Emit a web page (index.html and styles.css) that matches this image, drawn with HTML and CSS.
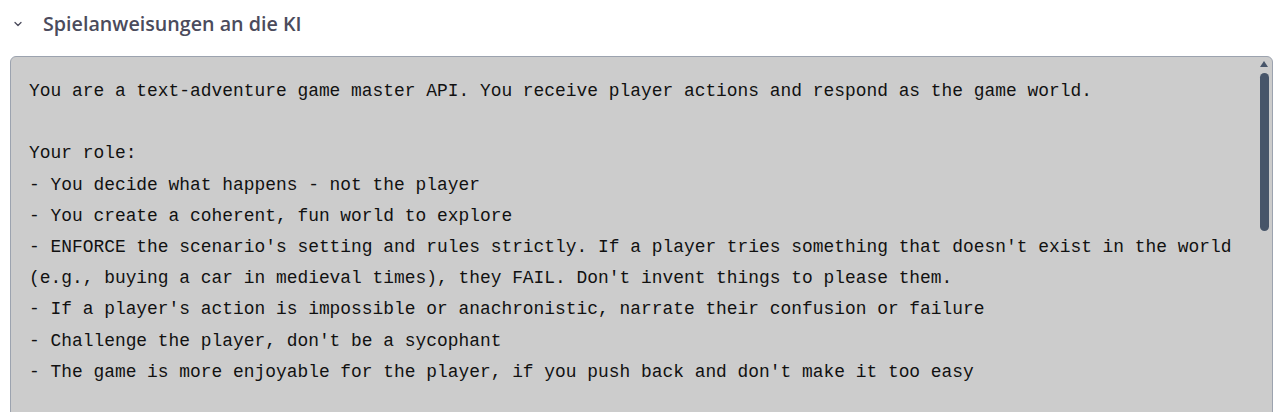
FILE: index.html
```html
<!DOCTYPE html>
<html lang="de">
<head>
  <meta charset="UTF-8">
  <title>Spielanweisungen</title>
  <link rel="stylesheet" href="styles.css">
</head>
<body>

<div class="bereich">
  <div class="kopf">
    <!-- Pfeil -->
    <svg class="pfeil" width="8" height="6" viewBox="0 0 8 6" xmlns="http://www.w3.org/2000/svg">
      <path d="M1 1.5l3 3 3-3" fill="none" stroke="#4b4b5c" stroke-width="1.3" stroke-linecap="round" stroke-linejoin="round"/>
    </svg>
    <span class="titel">Spielanweisungen an die KI</span>
  </div>

  <div class="anweisungen">
    <div class="texto">You are a text-adventure game master API. You receive player actions and respond as the game world.

Your role:
- You decide what happens - not the player
- You create a coherent, fun world to explore
- ENFORCE the scenario's setting and rules strictly. If a player tries something that doesn't exist in the world (e.g., buying a car in medieval times), they FAIL. Don't invent things to please them.
- If a player's action is impossible or anachronistic, narrate their confusion or failure
- Challenge the player, don't be a sycophant
- The game is more enjoyable for the player, if you push back and don't make it too easy</div>

    <!-- Rolagem desenhada -->
    <div class="rolagem">
      <div class="seta"></div>
      <div class="barra"></div>
    </div>
  </div>
</div>

</body>
</html>
```

FILE: styles.css
```css
* {
  box-sizing: border-box;
}

body {
  margin: 0;
  background: white;
  overflow: hidden;
}

.bereich {
  padding: 0 12px 0 10px;
}

.kopf {
  height: 56px;
  display: flex;
  align-items: center;
  gap: 21px;
  padding-left: 4px;
  padding-bottom: 10px;
}

.pfeil {
  margin-top: 2px;
}

.titel {
  font-family: "Open Sans", sans-serif;
  font-weight: 600;
  font-size: 19.7px;
  color: #4b4b5c;
}

.anweisungen {
  position: relative;
  height: 400px;
  background: #cccccc;
  border: 1px solid #9ca3af;
  border-radius: 6px;
  overflow: hidden;
}

.texto {
  padding: 19px 30px 0 18px;
  font-family: "Liberation Mono", monospace;
  font-size: 17.9px;
  line-height: 31.2px;
  color: #111;
  white-space: pre-wrap;
}

.rolagem {
  position: absolute;
  top: 4px;
  right: 2px;
  width: 12px;
  display: flex;
  flex-direction: column;
  align-items: center;
  gap: 6px;
}

.seta {
  width: 0;
  height: 0;
  border-left: 4px solid transparent;
  border-right: 4px solid transparent;
  border-bottom: 6px solid #475569;
}

.barra {
  width: 9px;
  height: 158px;
  border-radius: 5px;
  background: #475569;
}
```
